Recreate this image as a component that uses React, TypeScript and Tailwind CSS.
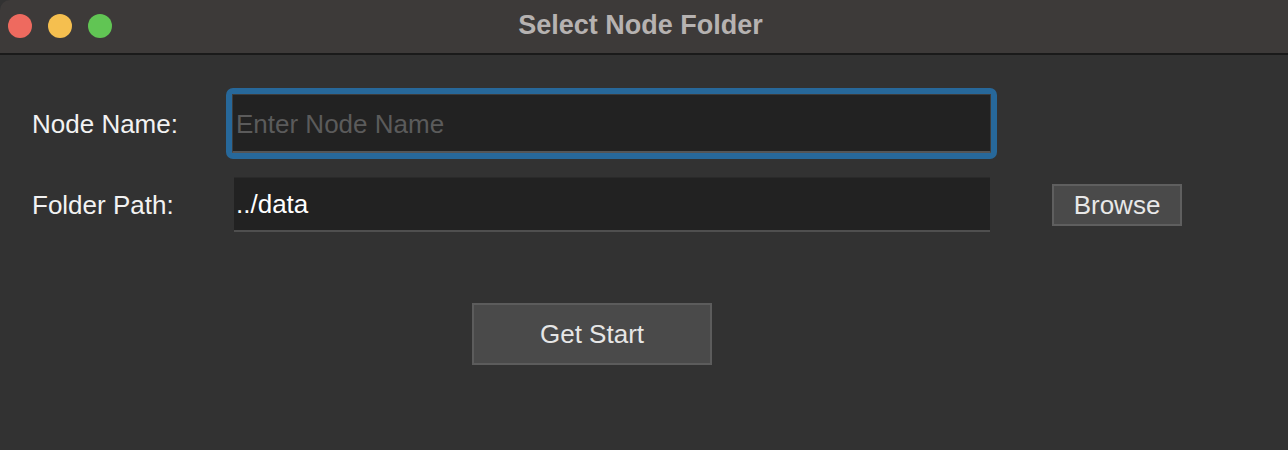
const App = () => {
  return (
    <div
      className="w-[1288px] h-[450px] bg-[#323232] overflow-hidden flex flex-col"
      style={{ fontFamily: '"Liberation Sans", Arial, sans-serif' }}
    >
      {/* Title bar */}
      <div className="relative h-[55px] shrink-0 bg-[#3d3a39] border-b-2 border-[#1a1a1a] rounded-tl-[10px] flex items-center justify-center">
        <div className="absolute left-[8px] top-[14px] flex gap-[16px]">
          <span className="w-[24px] h-[24px] rounded-full bg-[#ee6a5f]" />
          <span className="w-[24px] h-[24px] rounded-full bg-[#f5bf4f]" />
          <span className="w-[24px] h-[24px] rounded-full bg-[#61c554]" />
        </div>
        <h1 className="pr-[7px] pb-[2px] text-[27px] font-bold text-[#b6b2b1] leading-none">
          Select Node Folder
        </h1>
      </div>

      {/* Body */}
      <div className="flex flex-col pl-[32px] pt-[33px] text-[26px] text-[#f2f2f2]">
        {/* Node name */}
        <div className="flex items-center">
          <label className="w-[194px] leading-none">Node Name:</label>
          <div className="w-[771px] h-[71px] rounded-[7px] bg-[#27689a] p-[6px]">
            <input
              type="text"
              placeholder="Enter Node Name"
              className="w-full h-full bg-[#222222] border border-[#3c3c3c] border-b-2 border-b-[#555555] pl-[3px] pt-[3px] text-[26px] text-[#f2f2f2] placeholder:text-[#5b5b5b] outline-none"
            />
          </div>
        </div>

        {/* Folder path */}
        <div className="flex items-center mt-[18px]">
          <label className="w-[202px] leading-none">Folder Path:</label>
          <input
            type="text"
            defaultValue="../data"
            className="w-[756px] h-[55px] bg-[#222222] border-t border-[#2a2a2a] border-b-2 border-b-[#4f4f4f] px-[2px] text-[26px] text-[#ffffff] outline-none"
          />
          <button className="ml-[62px] w-[130px] h-[42px] bg-[#4a4a4a] border-2 border-[#5f5f5f] text-[#e8e8e8] text-[26px] leading-none">
            Browse
          </button>
        </div>

        {/* Get start */}
        <button className="ml-[440px] mt-[71px] w-[240px] h-[62px] bg-[#4a4a4a] border-2 border-[#5c5c5c] text-[#e6e6e6] text-[26px] leading-none">
          Get Start
        </button>
      </div>
    </div>
  );
};

export default App;
